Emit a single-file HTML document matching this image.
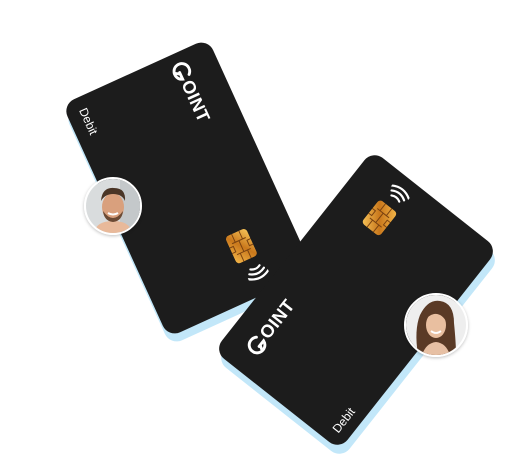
<!DOCTYPE html>
<html><head><meta charset="utf-8"><style>
html,body{margin:0;padding:0;background:#fff;width:526px;height:474px;overflow:hidden;position:relative;font-family:"Liberation Sans",sans-serif}
.card{position:absolute;width:256px;height:160px;border-radius:13px;background:#1c1c1c}
.sh{background:#c2e7f9}
.c{position:absolute}
.logo{position:absolute;display:flex;align-items:center;color:#fff;font-weight:bold;font-size:18px;letter-spacing:0.3px;height:20px}
.logo svg{margin-right:1px}
.debit{position:absolute;color:#fff;font-size:12px}
.av{position:absolute;border-radius:50%;border:2px solid #fff;overflow:hidden;box-shadow:0 1px 3px rgba(0,0,0,.25)}
</style></head><body>

<!-- left card -->
<div class="card sh" style="left:62px;top:116px;transform:rotate(65.5deg)"></div>
<div class="card" style="left:60px;top:108px;transform:rotate(65.5deg)">
  <div class="logo" style="left:10px;top:27px">
    <svg width="19" height="19" viewBox="0 0 17 17"><path d="M13.5 3.5A7 7 0 1 0 15 10.5H8.5" fill="none" stroke="#fff" stroke-width="2.6" stroke-linecap="round"/><path d="M7 15.5L10 10.5" stroke="#fff" stroke-width="2.6"/></svg>OINT</div>
  <div class="debit" style="left:12px;top:136px">Debit</div>
  <svg class="c" style="left:188px;top:44px" width="30" height="23" viewBox="0 0 30 23">
    <defs><linearGradient id="g1" x1="0" y1="0" x2="1" y2="1"><stop offset="0" stop-color="#f7c55a"/><stop offset=".5" stop-color="#c9781c"/><stop offset="1" stop-color="#f5b84a"/></linearGradient></defs>
    <rect x="0" y="0" width="30" height="23" rx="4" fill="url(#g1)"/>
    <path d="M0 7.5H9M0 15.5H9M21 7.5H30M21 15.5H30M9 4V19M21 4V19M9 11.5H21M12 0V4H18V0M12 23V19H18V23" stroke="#7a4210" stroke-width="1" fill="none"/>
  </svg>
  <svg class="c" style="left:226px;top:41px" width="18" height="22" viewBox="0 0 18 22">
    <path d="M2 6Q5 11 2 16M6 3Q11 11 6 19M10 0Q17 11 10 22" fill="none" stroke="#fff" stroke-width="2.2" stroke-linecap="round"/>
  </svg>
</div>
<div class="av" style="left:84px;top:177px;width:54px;height:54px">
  <svg width="54" height="54" viewBox="0 0 54 54"><rect width="54" height="54" fill="#d9dcdd"/><rect x="34" width="20" height="54" fill="#c4c8ca"/><path d="M8 54Q10 42 27 42Q44 42 46 54Z" fill="#e8b99a"/><ellipse cx="27" cy="28" rx="11" ry="14" fill="#d9a07d"/><path d="M15 22Q16 8 28 9Q40 9 39 22Q36 15 27 15Q19 15 15 22Z" fill="#4a3526"/><path d="M17 32Q27 46 37 32Q36 42 27 43Q18 42 17 32Z" fill="#6b4a34"/><path d="M22 34Q27 37 32 34" stroke="#fff" stroke-width="2" fill="none"/></svg>
</div>

<!-- right card -->
<div class="card sh" style="left:230px;top:229px;transform:rotate(-51.7deg)"></div>
<div class="card" style="left:228px;top:220px;transform:rotate(-51.7deg)">
  <div class="logo" style="left:22px;top:20px">
    <svg width="19" height="19" viewBox="0 0 17 17"><path d="M13.5 3.5A7 7 0 1 0 15 10.5H8.5" fill="none" stroke="#fff" stroke-width="2.6" stroke-linecap="round"/><path d="M7 15.5L10 10.5" stroke="#fff" stroke-width="2.6"/></svg>OINT</div>
  <div class="debit" style="left:12px;top:138px">Debit</div>
  <svg class="c" style="left:192px;top:36px" width="30" height="23" viewBox="0 0 30 23">
    <defs><linearGradient id="g2" x1="0" y1="0" x2="1" y2="1"><stop offset="0" stop-color="#f7c55a"/><stop offset=".5" stop-color="#c9781c"/><stop offset="1" stop-color="#f5b84a"/></linearGradient></defs>
    <rect x="0" y="0" width="30" height="23" rx="4" fill="url(#g2)"/>
    <path d="M0 7.5H9M0 15.5H9M21 7.5H30M21 15.5H30M9 4V19M21 4V19M9 11.5H21M12 0V4H18V0M12 23V19H18V23" stroke="#7a4210" stroke-width="1" fill="none"/>
  </svg>
  <svg class="c" style="left:230px;top:37px" width="18" height="22" viewBox="0 0 18 22">
    <path d="M2 6Q5 11 2 16M6 3Q11 11 6 19M10 0Q17 11 10 22" fill="none" stroke="#fff" stroke-width="2.2" stroke-linecap="round"/>
  </svg>
</div>
<div class="av" style="left:404px;top:293px;width:60px;height:60px">
  <svg width="60" height="60" viewBox="0 0 60 60"><rect width="60" height="60" fill="#eeeeee"/><path d="M12 60Q8 35 14 20Q22 4 34 6Q48 8 48 28Q50 48 50 60Z" fill="#5a3a26"/><path d="M16 60Q20 48 30 47Q40 48 44 60Z" fill="#e7c0a4"/><ellipse cx="30" cy="30" rx="10" ry="13" fill="#e9bfa0"/><path d="M20 26Q24 12 36 14Q40 20 41 28Q36 18 28 19Q22 20 20 26Z" fill="#5a3a26"/><path d="M25 36Q30 40 35 36" stroke="#fff" stroke-width="1.8" fill="none"/></svg>
</div>
</body></html>
